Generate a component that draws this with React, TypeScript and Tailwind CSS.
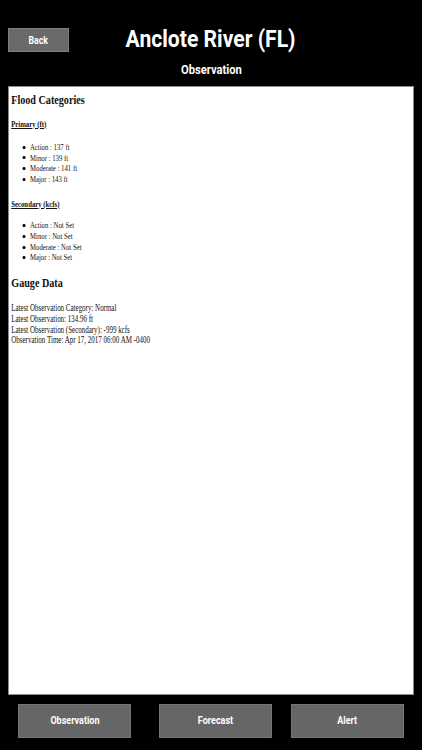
import React from "react";

const native = { fontFamily: "Roboto, 'Liberation Sans', sans-serif" };
const serif = { fontFamily: "'Liberation Serif', 'Times New Roman', serif" };

const primary = [
  "Action : 137 ft",
  "Minor : 139 ft",
  "Moderate : 141 ft",
  "Major : 143 ft",
];

const secondary = [
  "Action : Not Set",
  "Minor : Not Set",
  "Moderate : Not Set",
  "Major : Not Set",
];

const gauge = [
  "Latest Observation Category: Normal",
  "Latest Observation: 134.96 ft",
  "Latest Observation (Secondary): -999 kcfs",
  "Observation Time: Apr 17, 2017 06:00 AM -0400",
];

function Bullets({ items, className }: { items: string[]; className: string }) {
  return (
    <ul className={className}>
      {items.map((item) => (
        <li key={item} className="flex items-center pl-[15px] text-[9px] leading-[10.7px]">
          <span className="w-[4px] h-[3px] rounded-full bg-black mr-[6px]" />
          {item}
        </li>
      ))}
    </ul>
  );
}

function NavButton({ label, className }: { label: string; className: string }) {
  return (
    <button
      className={`w-[113px] h-[34px] bg-[#666666] border border-[#767676] flex items-center justify-center ${className}`}
    >
      <span className="inline-block scale-x-[0.82] text-white font-bold text-[11px]">{label}</span>
    </button>
  );
}

export default function App() {
  return (
    <div className="w-[422px] h-[750px] bg-black flex flex-col overflow-hidden" style={native}>
      {/* Header */}
      <div className="h-[86px] flex flex-col">
        <div className="grid grid-cols-[1fr_auto_1fr] items-start pt-[25px]">
          <div className="pl-[8px] pt-[3px]">
            <button className="w-[61px] h-[24px] bg-[#6a6a6a] border border-[#7e7e7e] flex items-center justify-center">
              <span className="inline-block scale-x-[0.87] text-white font-bold text-[10px]">Back</span>
            </button>
          </div>
          <h1 className="inline-block scale-x-[0.88] text-white font-bold text-[24px] leading-[28px] whitespace-nowrap">
            Anclote River (FL)
          </h1>
          <div />
        </div>
        <div className="mt-[8px] text-center leading-[16px]">
          <span className="inline-block scale-x-[0.86] text-white font-bold text-[13px]">Observation</span>
        </div>
      </div>

      {/* Content panel */}
      <div className="flex-1 mx-[8px] bg-white border border-[#8a8a8a] overflow-hidden">
        <div className="origin-top-left scale-x-[0.75] w-[530px] pl-[3px] pt-[5px] text-[#111]" style={serif}>
          <h2 className="font-bold text-[13.5px] leading-[16px]">Flood Categories</h2>
          <h5 className="mt-[10.5px] font-bold underline text-[9px] leading-[11px]">Primary (ft)</h5>
          <Bullets items={primary} className="mt-[12.3px]" />
          <h5 className="mt-[13.9px] font-bold underline text-[9px] leading-[11px]">Secondary (kcfs)</h5>
          <Bullets items={secondary} className="mt-[10.8px]" />
          <h2 className="mt-[11.8px] font-bold text-[13.5px] leading-[16px]">Gauge Data</h2>
          <div className="mt-[12px] text-[9.3px] leading-[10.8px]">
            {gauge.map((line) => (
              <p key={line}>{line}</p>
            ))}
          </div>
        </div>
      </div>

      {/* Bottom tabs */}
      <div className="h-[55px] pt-[9px] flex items-start">
        <NavButton label="Observation" className="ml-[18px]" />
        <NavButton label="Forecast" className="ml-[28px]" />
        <NavButton label="Alert" className="ml-[19px]" />
      </div>
    </div>
  );
}
